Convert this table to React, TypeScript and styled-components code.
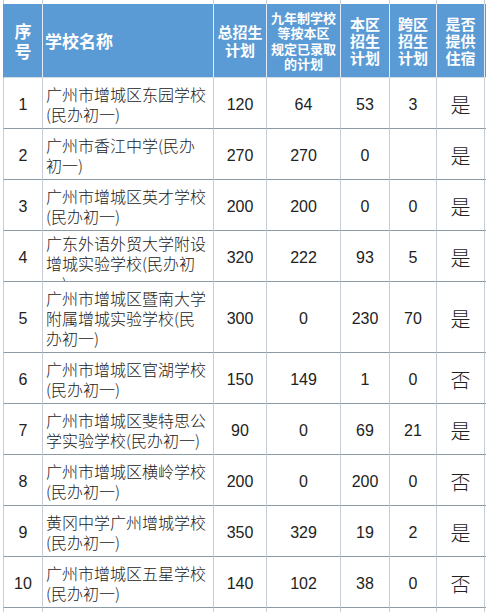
import React from 'react'
import styled, { createGlobalStyle } from 'styled-components'

type School = {
  no: number
  name: string
  total: string
  nine: string
  local: string
  cross: string
  dorm: string
  tall?: boolean
}

const schools: School[] = [
  { no: 1, name: '广州市增城区东园学校(民办初一)', total: '120', nine: '64', local: '53', cross: '3', dorm: '是' },
  { no: 2, name: '广州市香江中学(民办初一)', total: '270', nine: '270', local: '0', cross: '', dorm: '是' },
  { no: 3, name: '广州市增城区英才学校(民办初一)', total: '200', nine: '200', local: '0', cross: '0', dorm: '是' },
  { no: 4, name: '广东外语外贸大学附设增城实验学校(民办初一)', total: '320', nine: '222', local: '93', cross: '5', dorm: '是' },
  { no: 5, name: '广州市增城区暨南大学附属增城实验学校(民办初一)', total: '300', nine: '0', local: '230', cross: '70', dorm: '是', tall: true },
  { no: 6, name: '广州市增城区官湖学校(民办初一)', total: '150', nine: '149', local: '1', cross: '0', dorm: '否' },
  { no: 7, name: '广州市增城区斐特思公学实验学校(民办初一)', total: '90', nine: '0', local: '69', cross: '21', dorm: '是' },
  { no: 8, name: '广州市增城区横岭学校(民办初一)', total: '200', nine: '0', local: '200', cross: '0', dorm: '否' },
  { no: 9, name: '黄冈中学广州增城学校(民办初一)', total: '350', nine: '329', local: '19', cross: '2', dorm: '是' },
  { no: 10, name: '广州市增城区五星学校(民办初一)', total: '140', nine: '102', local: '38', cross: '0', dorm: '否' },
]

const COLS = '40px 171px 53px 74px 49px 47px 48px 60px'

const GlobalStyle = createGlobalStyle`
  html, body {
    margin: 0;
    padding: 0;
    background: #fff;
  }
  body {
    overflow: hidden;
  }
`

const Page = styled.div`
  width: 486px;
  height: 612px;
  overflow: hidden;
  padding-left: 3px;
  box-sizing: border-box;
  background: #fff;
  color: #222;
  font-family: "Noto Sans CJK SC", sans-serif;
`

const Sheet = styled.div`
  width: max-content;
`

const Row = styled.div<{ $h: number }>`
  display: grid;
  grid-template-columns: ${COLS};
  height: ${p => p.$h}px;
`

const Cell = styled.div`
  box-sizing: border-box;
  border-right: 1px solid #c7cdd6;
  border-bottom: 1px solid #8a9ba6;
  overflow: hidden;
  &:first-child {
    border-left: 1px solid #c7cdd6;
  }
`

const EdgeCell = styled(Cell)`
  border-bottom: none;
`

const HeadCell = styled(Cell)<{ $left?: boolean }>`
  display: flex;
  flex-direction: column;
  align-items: ${p => (p.$left ? 'flex-start' : 'center')};
  justify-content: center;
  padding: ${p => (p.$left ? '0 0 0 2px' : '0')};
  background: #5b9bd5;
  color: #fff;
  font-weight: 700;
  text-align: center;
  border-right-color: #e2ecf6;
  border-bottom-color: #d3dbe3;
  &:first-child {
    border-left-color: #5b9bd5;
  }
`

const HeadLine = styled.span<{ $size: number; $lh: number }>`
  display: block;
  font-size: ${p => p.$size}px;
  line-height: ${p => p.$lh}px;
  height: ${p => p.$lh}px;
  white-space: nowrap;
`

const NumCell = styled(Cell)`
  display: flex;
  align-items: center;
  justify-content: center;
  padding-top: 3px;
  font-family: "Liberation Sans Narrow", "Liberation Sans", "Noto Sans CJK SC", sans-serif;
  font-size: 16px;
`

const DormCell = styled(Cell)`
  display: flex;
  align-items: center;
  justify-content: center;
  padding-top: 3px;
  font-size: 20px;
  font-weight: 300;
`

const NameCell = styled(Cell)`
  display: flex;
  padding: 2px 5px 0 3px;
  font-size: 16px;
  line-height: 20px;
  font-weight: 300;
`

const NameText = styled.div`
  width: 100%;
  margin: auto 0;
`

const headers: { lines: string[]; size: number; lh: number; left?: boolean }[] = [
  { lines: ['序', '号'], size: 17, lh: 20 },
  { lines: ['学校名称'], size: 17, lh: 20, left: true },
  { lines: ['总招生', '计划'], size: 15, lh: 18 },
  { lines: ['九年制学校', '等按本区', '规定已录取', '的计划'], size: 13, lh: 15.5 },
  { lines: ['本区', '招生', '计划'], size: 15, lh: 17 },
  { lines: ['跨区', '招生', '计划'], size: 15, lh: 17 },
  { lines: ['是否', '提供', '住宿'], size: 15, lh: 17 },
  { lines: [], size: 15, lh: 17 },
]

const EdgeRow: React.FC<{ h: number }> = ({ h }) => (
  <Row $h={h}>
    {Array.from({ length: 8 }).map((_, i) => (
      <EdgeCell key={i} />
    ))}
  </Row>
)

export default function App() {
  return (
    <>
      <GlobalStyle />
      <Page lang="zh-CN">
        <Sheet>
          <EdgeRow h={4} />
          <Row $h={74}>
            {headers.map((h, i) => (
              <HeadCell key={i} $left={h.left}>
                {h.lines.map(line => (
                  <HeadLine key={line} $size={h.size} $lh={h.lh}>
                    {line}
                  </HeadLine>
                ))}
              </HeadCell>
            ))}
          </Row>
          {schools.map(s => (
            <Row key={s.no} $h={s.tall ? 71 : 51}>
              <NumCell>{s.no}</NumCell>
              <NameCell>
                <NameText>{s.name}</NameText>
              </NameCell>
              <NumCell>{s.total}</NumCell>
              <NumCell>{s.nine}</NumCell>
              <NumCell>{s.local}</NumCell>
              <NumCell>{s.cross}</NumCell>
              <DormCell>{s.dorm}</DormCell>
              <Cell />
            </Row>
          ))}
          <EdgeRow h={6} />
        </Sheet>
      </Page>
    </>
  )
}
